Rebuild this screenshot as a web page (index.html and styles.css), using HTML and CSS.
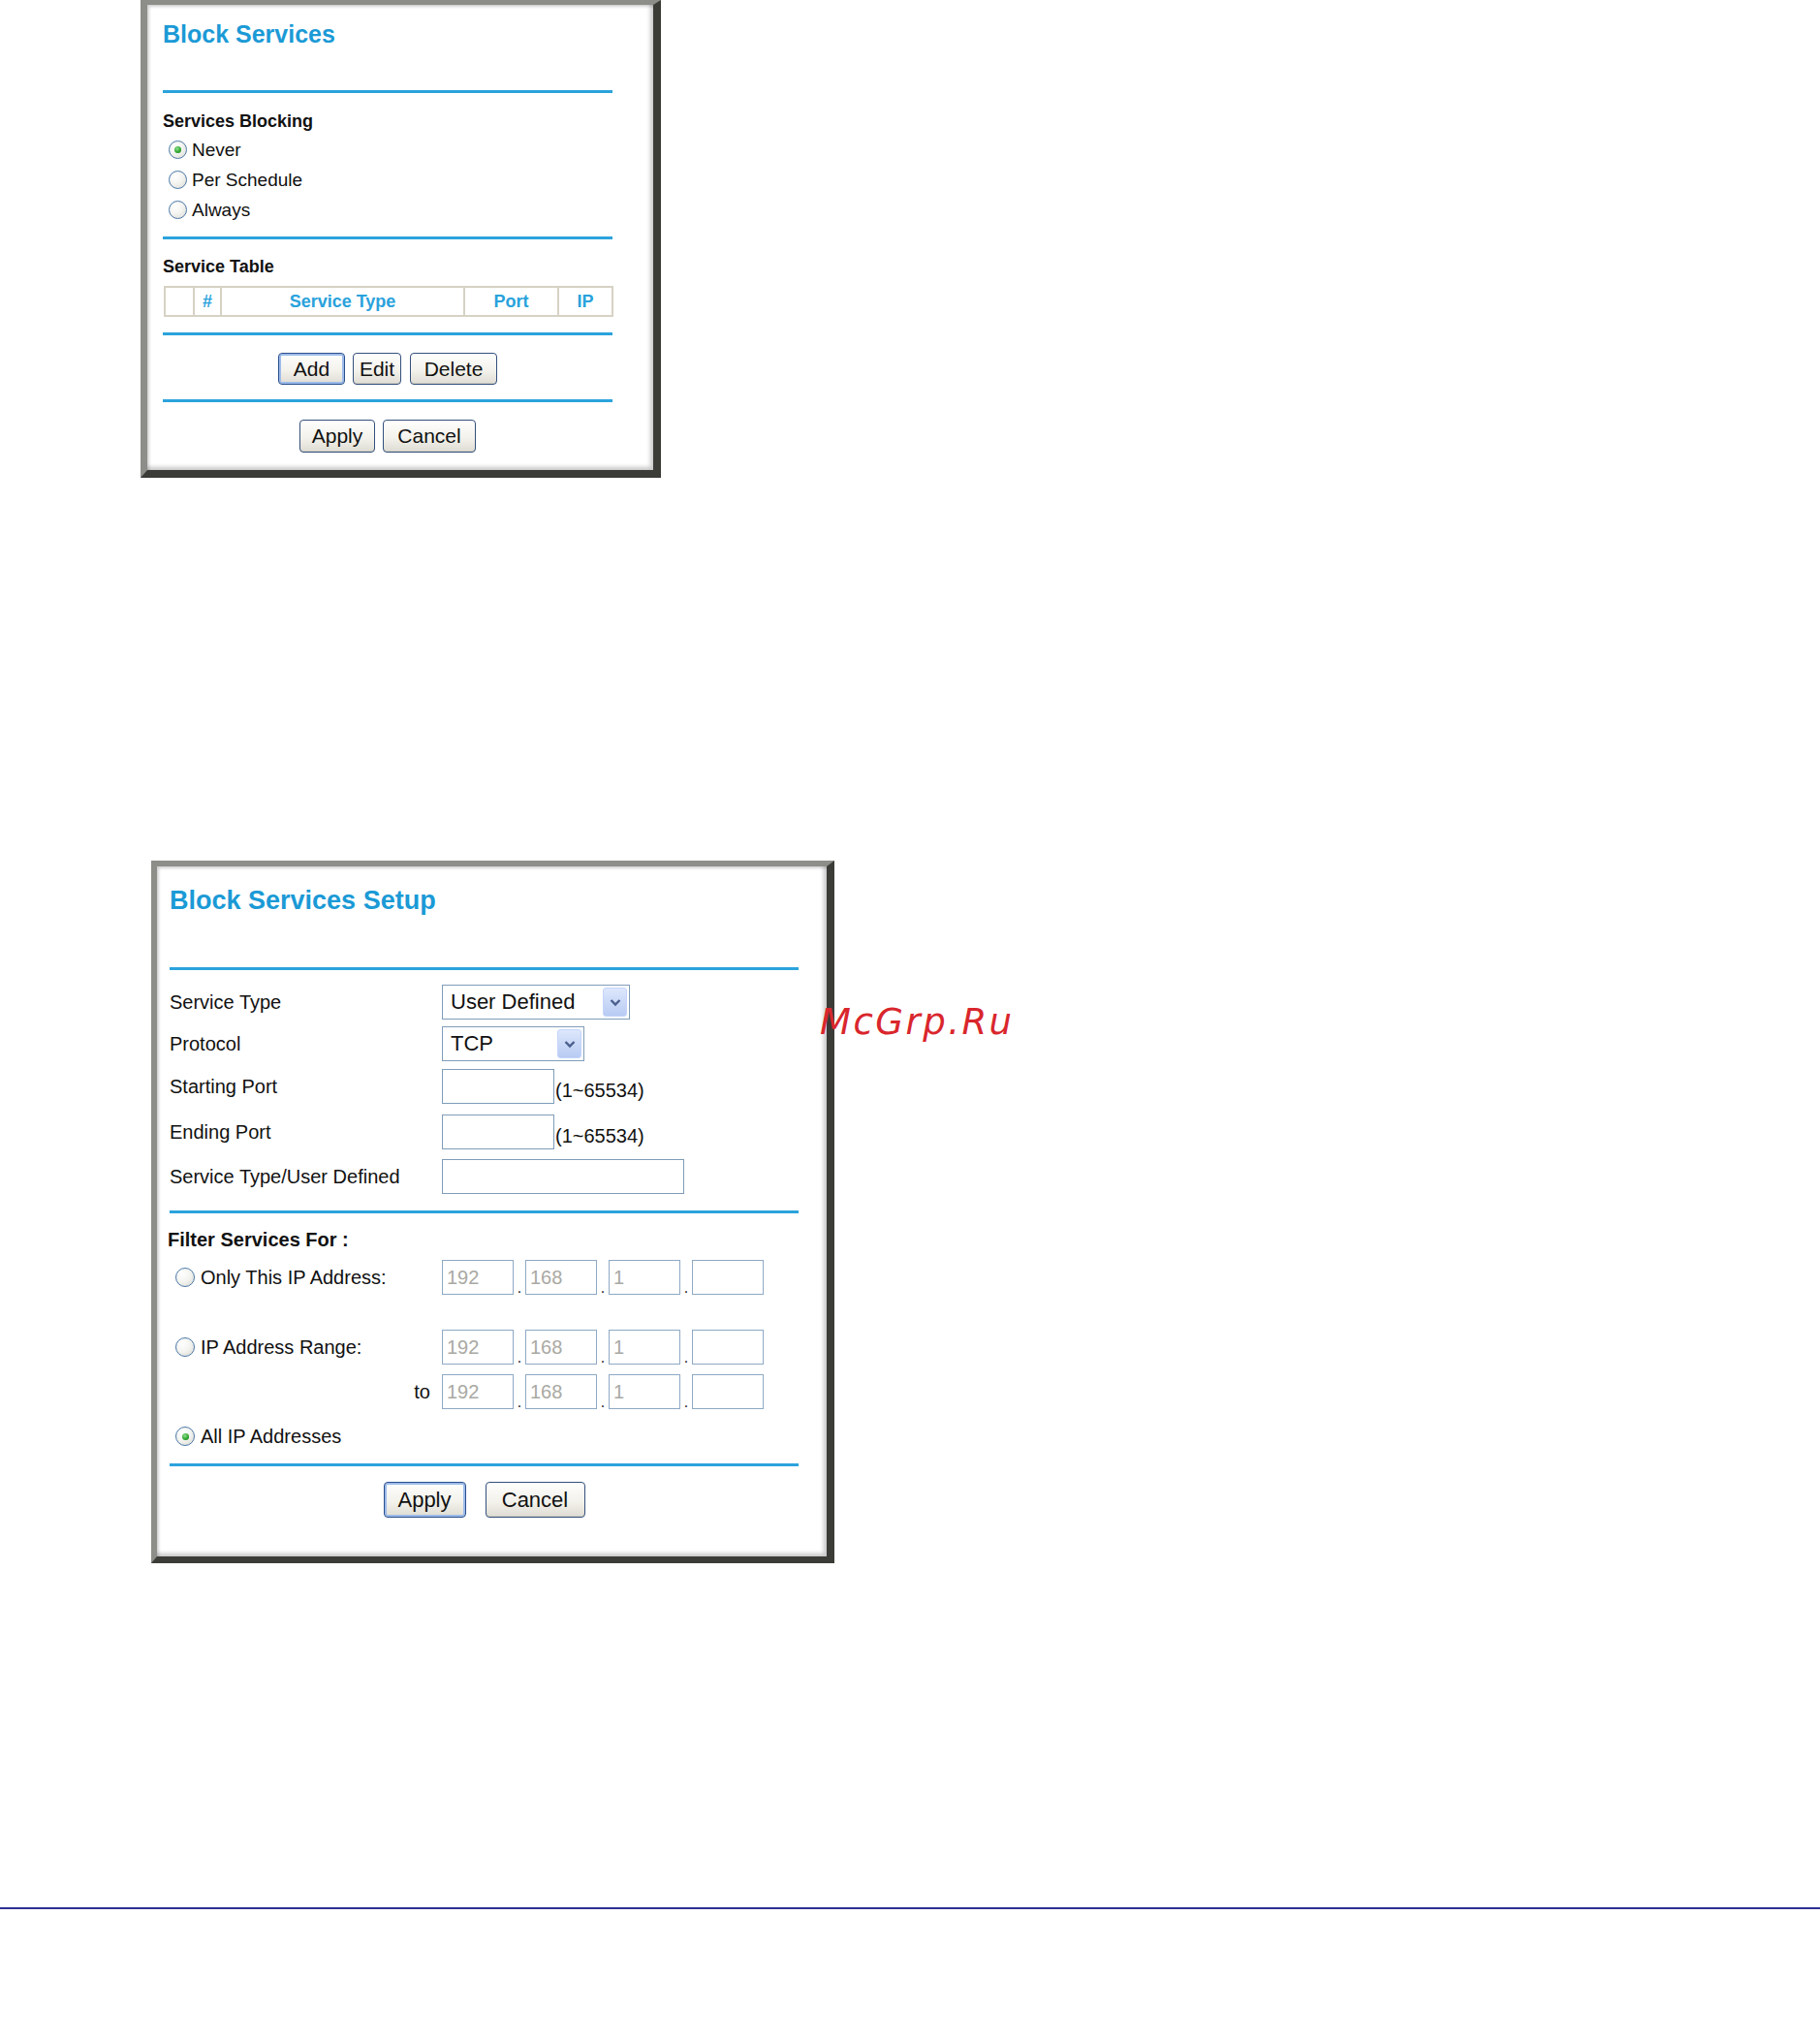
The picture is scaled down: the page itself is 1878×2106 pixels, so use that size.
FILE: index.html
```html
<!DOCTYPE html>
<html lang="en">
<head>
<meta charset="utf-8">
<title>Block Services</title>
<link rel="stylesheet" href="styles.css">
</head>
<body>
<div class="page">

  <section class="panel panel-a">
    <div class="title">Block Services</div>
    <div class="sep sep-1"></div>
    <div class="heading h-blocking">Services Blocking</div>
    <div class="opts">
      <div class="opt"><span class="radio on"></span><span>Never</span></div>
      <div class="opt"><span class="radio"></span><span>Per Schedule</span></div>
      <div class="opt"><span class="radio"></span><span>Always</span></div>
    </div>
    <div class="sep sep-2"></div>
    <div class="heading h-table">Service Table</div>
    <table class="svc-table">
      <colgroup>
        <col class="c1"><col class="c2"><col class="c3"><col class="c4"><col class="c5">
      </colgroup>
      <tr><th></th><th>#</th><th>Service Type</th><th>Port</th><th>IP</th></tr>
    </table>
    <div class="sep sep-3"></div>
    <div class="btn-row row-edit">
      <button class="btn default b-add">Add</button>
      <button class="btn b-edit">Edit</button>
      <button class="btn b-delete">Delete</button>
    </div>
    <div class="sep sep-4"></div>
    <div class="btn-row row-apply">
      <button class="btn b-apply">Apply</button>
      <button class="btn b-cancel">Cancel</button>
    </div>
  </section>

  <section class="panel panel-b">
    <div class="title">Block Services Setup</div>
    <div class="sep sep-1"></div>
    <div class="form">
      <div class="label">Service Type</div>
      <div class="ctl">
        <div class="select w-type"><span>User Defined</span><span class="arrow"><svg width="12" height="9" viewBox="0 0 12 9"><path d="M1.5 2 L6 6.5 L10.5 2" fill="none" stroke="#4a5f8c" stroke-width="2.4"/></svg></span></div>
      </div>
      <div class="label">Protocol</div>
      <div class="ctl">
        <div class="select w-proto"><span>TCP</span><span class="arrow"><svg width="12" height="9" viewBox="0 0 12 9"><path d="M1.5 2 L6 6.5 L10.5 2" fill="none" stroke="#4a5f8c" stroke-width="2.4"/></svg></span></div>
      </div>
      <div class="label">Starting Port</div>
      <div class="ctl"><div class="field w-port"></div><span class="hint">(1~65534)</span></div>
      <div class="label">Ending Port</div>
      <div class="ctl"><div class="field w-port"></div><span class="hint">(1~65534)</span></div>
      <div class="label">Service Type/User Defined</div>
      <div class="ctl"><div class="field w-name"></div></div>
    </div>
    <div class="sep sep-2"></div>
    <div class="heading h-filter">Filter Services For :</div>

    <div class="ip-row r-only">
      <div class="ip-label"><span class="radio"></span><span>Only This IP Address:</span></div>
      <div class="ip">
        <div class="ipbox">192</div><span class="dot">.</span>
        <div class="ipbox">168</div><span class="dot">.</span>
        <div class="ipbox">1</div><span class="dot">.</span>
        <div class="ipbox"></div>
      </div>
    </div>
    <div class="ip-row r-range">
      <div class="ip-label"><span class="radio"></span><span>IP Address Range:</span></div>
      <div class="ip">
        <div class="ipbox">192</div><span class="dot">.</span>
        <div class="ipbox">168</div><span class="dot">.</span>
        <div class="ipbox">1</div><span class="dot">.</span>
        <div class="ipbox"></div>
      </div>
    </div>
    <div class="ip-row r-to">
      <div class="ip-label to">to</div>
      <div class="ip">
        <div class="ipbox">192</div><span class="dot">.</span>
        <div class="ipbox">168</div><span class="dot">.</span>
        <div class="ipbox">1</div><span class="dot">.</span>
        <div class="ipbox"></div>
      </div>
    </div>
    <div class="ip-row r-all">
      <div class="ip-label"><span class="radio on"></span><span>All IP Addresses</span></div>
    </div>
    <div class="sep sep-3"></div>
    <div class="btn-row row-b">
      <button class="btn default bb-apply">Apply</button>
      <button class="btn bb-cancel">Cancel</button>
    </div>
  </section>

  <div class="watermark">McGrp.Ru</div>
  <div class="rule"></div>
</div>
</body>
</html>
```
FILE: styles.css
```css
* { box-sizing: border-box; }
html, body { margin: 0; padding: 0; background: #fff; }
body { font-family: "Liberation Sans", Arial, sans-serif; color: #111; }

.page { position: relative; width: 1878px; height: 2106px; overflow: hidden; }

/* framed panels */
.panel {
  background: #fff;
  border-style: solid;
  border-color: #8d8d89 #3b3b38 #3b3b38 #8d8d89;
  box-shadow: inset -3px -3px 4px rgba(0,0,0,0.22), inset 2px 2px 3px rgba(0,0,0,0.18);
}
.title { color: #1b9ad6; font-weight: bold; white-space: nowrap; }
.sep { height: 3px; background: #2ba3dc; }
.heading { font-weight: bold; color: #111; white-space: nowrap; }

/* radio (XP style) */
.radio {
  position: relative;
  flex: none;
  border-radius: 50%;
  border: 1.5px solid #4a78a8;
  background: radial-gradient(circle at 35% 30%, #ffffff 0, #f4f4f1 45%, #d9d9d2 100%);
}
.radio.on::after {
  content: "";
  position: absolute;
  left: 50%; top: 50%;
  width: 7px; height: 7px;
  margin: -3.5px 0 0 -3.5px;
  border-radius: 50%;
  background: radial-gradient(circle at 40% 35%, #8fe08f 0, #2aa22a 60%, #1b7d1b 100%);
}

/* buttons (XP style) */
.btn-row { display: flex; justify-content: center; }
.btn {
  font-family: "Liberation Sans", Arial, sans-serif;
  color: #111;
  padding: 0;
  border: 1px solid #34507c;
  border-radius: 4px;
  background: linear-gradient(#fefefd, #f3f2ec 55%, #dedcd3);
  box-shadow: inset 0 -1px 0 #cfcdc2;
}
.btn.default { border-color: #2b4f8c; box-shadow: inset 0 0 0 2px #9dbbea; }

/* ---------- panel A ---------- */
.panel-a {
  margin-left: 145px;
  width: 537px;
  height: 493px;
  border-width: 5px 8px 8px 7px;
  padding: 15px 0 0 16px;
}
.panel-a .title { font-size: 25px; line-height: 30px; height: 30px; }
.panel-a .sep { width: 464px; }
.panel-a .sep-1 { margin-top: 43px; }
.panel-a .heading { font-size: 18px; line-height: 24px; height: 24px; }
.panel-a .h-blocking { margin-top: 17px; }
.opts { margin-top: 2px; }
.opt { display: flex; align-items: center; gap: 5px; height: 31px; padding-left: 6px; font-size: 19px; }
.panel-a .radio { width: 19px; height: 19px; }
.panel-a .sep-2 { margin-top: 12px; }
.panel-a .h-table { margin-top: 16px; }
.svc-table {
  margin-top: 8px;
  margin-left: 1px;
  width: 462px;
  height: 30px;
  border-collapse: collapse;
  table-layout: fixed;
}
.svc-table th {
  border: 2px solid #d6d2c4;
  padding: 0;
  height: 30px;
  color: #2aa2dc;
  font-size: 18px;
  font-weight: bold;
  text-align: center;
}
.c1 { width: 30px; } .c2 { width: 28px; } .c3 { width: 251px; } .c4 { width: 97px; } .c5 { width: 56px; }
.panel-a .sep-3 { margin-top: 16px; }
.row-edit { width: 464px; margin-top: 18px; height: 33px; }
.row-edit .btn { height: 33px; font-size: 21px; }
.b-add { width: 69px; margin-right: 8px; }
.b-edit { width: 50px; margin-right: 9px; }
.b-delete { width: 90px; }
.panel-a .sep-4 { margin-top: 15px; }
.row-apply { width: 464px; margin-top: 18px; height: 34px; gap: 8px; }
.row-apply .btn { height: 34px; font-size: 21px; }
.b-apply { width: 78px; }
.b-cancel { width: 96px; }

/* ---------- panel B ---------- */
.panel-b {
  margin-top: 395px;
  margin-left: 156px;
  width: 705px;
  height: 725px;
  border-width: 6px 8px 7px 6px;
  padding: 19px 0 0 13px;
}
.panel-b .title { font-size: 27px; line-height: 32px; height: 32px; }
.panel-b .sep { width: 649px; }
.panel-b .sep-1 { margin-top: 53px; }

.form {
  margin-top: 15px;
  display: grid;
  grid-template-columns: 281px auto;
  grid-template-rows: 43px 44px 47px 46px 36px;
  align-items: start;
}
.label { display: flex; align-items: center; height: 36px; font-size: 20px; white-space: nowrap; }
.ctl { display: flex; align-items: flex-end; height: 36px; }
.select {
  display: flex;
  align-items: center;
  height: 36px;
  border: 1px solid #7f9db9;
  background: #fff;
  padding-left: 8px;
  font-size: 22px;
}
.select .arrow {
  margin-left: auto;
  margin-right: 2px;
  width: 25px;
  height: 30px;
  border-radius: 3px;
  border: 1px solid #c4d4fb;
  background: linear-gradient(#dde7fc, #b8cbf3);
  display: flex;
  align-items: center;
  justify-content: center;
}
.w-type { width: 194px; }
.w-proto { width: 147px; }
.field { height: 36px; border: 1px solid #7f9db9; background: #fff; }
.w-port { width: 116px; }
.w-name { width: 250px; }
.hint { font-size: 20px; line-height: 28px; margin-left: 1px; white-space: nowrap; }

.panel-b .sep-2 { margin-top: 17px; }
.h-filter { margin-top: 15px; margin-left: -2px; font-size: 20px; line-height: 24px; height: 24px; }

.ip-row { display: grid; grid-template-columns: 281px auto; height: 36px; }
.r-only { margin-top: 9px; }
.r-range { margin-top: 36px; }
.r-to { margin-top: 10px; }
.r-all { margin-top: 10px; }
.ip-label { display: flex; align-items: center; gap: 6px; padding-left: 6px; font-size: 20px; white-space: nowrap; }
.ip-label.to { justify-content: flex-end; padding-right: 12px; }
.panel-b .radio { width: 20px; height: 20px; }
.ip { display: flex; align-items: flex-end; }
.ipbox {
  width: 74px;
  height: 36px;
  border: 1px solid #8ea9c5;
  background: #fff;
  color: #a9a9a3;
  font-size: 20px;
  line-height: 34px;
  padding-left: 4px;
}
.dot { width: 12px; font-size: 16px; line-height: 14px; text-align: center; color: #222; }

.panel-b .sep-3 { margin-top: 10px; }
.row-b { width: 649px; margin-top: 16px; height: 37px; gap: 20px; }
.row-b .btn { height: 37px; font-size: 22px; }
.bb-apply { width: 85px; }
.bb-cancel { width: 103px; }

/* watermark over the page */
.watermark {
  position: absolute;
  left: 846px;
  top: 1036px;
  font-family: "DejaVu Sans", sans-serif;
  font-style: italic;
  font-size: 37px;
  line-height: 37px;
  letter-spacing: 2.5px;
  color: #d9262c;
  white-space: nowrap;
}

.rule { margin-top: 355px; height: 2px; background: #2e3192; }
```
